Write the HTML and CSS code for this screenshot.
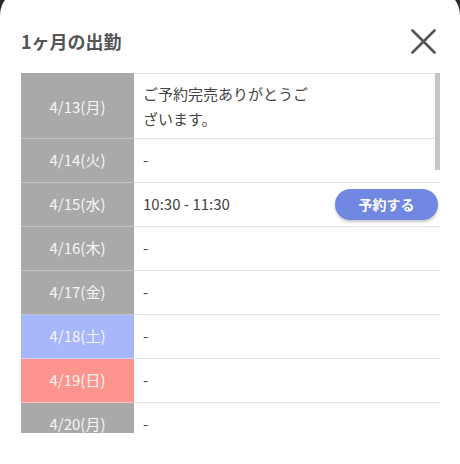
FILE: index.html
```html
<!DOCTYPE html>
<html lang="ja">
<head>
<meta charset="utf-8">
<title>1ヶ月の出勤</title>
<link rel="stylesheet" href="styles.css">
</head>
<body>
<div class="modal">
  <div class="header">
    <h1 class="title">1ヶ月の出勤</h1>
    <button class="close" aria-label="閉じる">
      <svg width="25" height="25" viewBox="0 0 25 25"><path d="M1.5 1.5 L23.5 23.5 M23.5 1.5 L1.5 23.5" stroke="#555" stroke-width="2.6" stroke-linecap="round" fill="none"/></svg>
    </button>
  </div>
  <div class="scroll-wrap">
    <div class="scroll">
      <table class="schedule">
        <colgroup><col class="c-date"><col><col class="c-btn"></colgroup>
        <tbody>
          <tr class="first"><td class="date">4/13(月)</td><td class="info">ご予約完売ありがとうございます。</td><td class="act"></td></tr>
          <tr><td class="date">4/14(火)</td><td class="info">-</td><td class="act"></td></tr>
          <tr><td class="date">4/15(水)</td><td class="info">10:30 - 11:30</td><td class="act"><span class="reserve">予約する</span></td></tr>
          <tr><td class="date">4/16(木)</td><td class="info">-</td><td class="act"></td></tr>
          <tr><td class="date">4/17(金)</td><td class="info">-</td><td class="act"></td></tr>
          <tr><td class="date sat">4/18(土)</td><td class="info">-</td><td class="act"></td></tr>
          <tr><td class="date sun">4/19(日)</td><td class="info">-</td><td class="act"></td></tr>
          <tr><td class="date">4/20(月)</td><td class="info">-</td><td class="act"></td></tr>
          <tr><td class="date">4/21(火)</td><td class="info">-</td><td class="act"></td></tr>
          <tr><td class="date">4/22(水)</td><td class="info">-</td><td class="act"></td></tr>
          <tr><td class="date">4/23(木)</td><td class="info">-</td><td class="act"></td></tr>
          <tr><td class="date">4/24(金)</td><td class="info">-</td><td class="act"></td></tr>
          <tr><td class="date sat">4/25(土)</td><td class="info">-</td><td class="act"></td></tr>
          <tr><td class="date sun">4/26(日)</td><td class="info">-</td><td class="act"></td></tr>
          <tr><td class="date">4/27(月)</td><td class="info">-</td><td class="act"></td></tr>
          <tr><td class="date">4/28(火)</td><td class="info">-</td><td class="act"></td></tr>
          <tr><td class="date">4/29(水)</td><td class="info">-</td><td class="act"></td></tr>
          <tr><td class="date">4/30(木)</td><td class="info">-</td><td class="act"></td></tr>
          <tr><td class="date">5/1(金)</td><td class="info">-</td><td class="act"></td></tr>
          <tr><td class="date sat">5/2(土)</td><td class="info">-</td><td class="act"></td></tr>
          <tr><td class="date sun">5/3(日)</td><td class="info">-</td><td class="act"></td></tr>
          <tr><td class="date">5/4(月)</td><td class="info">-</td><td class="act"></td></tr>
          <tr><td class="date">5/5(火)</td><td class="info">-</td><td class="act"></td></tr>
          <tr><td class="date">5/6(水)</td><td class="info">-</td><td class="act"></td></tr>
          <tr><td class="date">5/7(木)</td><td class="info">-</td><td class="act"></td></tr>
          <tr><td class="date">5/8(金)</td><td class="info">-</td><td class="act"></td></tr>
          <tr><td class="date sat">5/9(土)</td><td class="info">-</td><td class="act"></td></tr>
          <tr><td class="date sun">5/10(日)</td><td class="info">-</td><td class="act"></td></tr>
          <tr><td class="date">5/11(月)</td><td class="info">-</td><td class="act"></td></tr>
          <tr><td class="date">5/12(火)</td><td class="info">-</td><td class="act"></td></tr>
        </tbody>
      </table>
    </div>
    <div class="thumb"></div>
  </div>
</div>
</body>
</html>
```

FILE: styles.css
```css
html, body {
  margin: 0;
  padding: 0;
  height: 100%;
  overflow: hidden;
}
body {
  background: #2a2a2a;
  font-family: "Noto Sans CJK JP", "Noto Sans", sans-serif;
  color: #444;
}
.modal {
  margin-top: -10px;
  background: #fff;
  border-radius: 25px 25px 0 0;
  padding: 39px 20px 0 21px;
  height: 520px;
  box-sizing: border-box;
}
.header {
  display: flex;
  justify-content: space-between;
  align-items: center;
  height: 24px;
  margin-bottom: 20px;
}
.title {
  margin: 0;
  font-size: 18px;
  font-weight: bold;
  color: #555;
  line-height: 24px;
}
.close {
  border: 0;
  background: none;
  padding: 0;
  margin: 0 4px 0 0;
  width: 25px;
  height: 25px;
  display: flex;
}
.scroll-wrap {
  position: relative;
  height: 360px;
}
.scroll {
  height: 100%;
  overflow-y: auto;
  scrollbar-width: none;
}
.scroll::-webkit-scrollbar {
  display: none;
}
.thumb {
  position: absolute;
  top: 0;
  right: 0;
  width: 5px;
  height: 97px;
  background: #c6c6c6;
}
.schedule {
  width: 100%;
  border-collapse: separate;
  border-spacing: 0;
  table-layout: fixed;
  font-size: 15px;
}
.c-date { width: 113px; }
.c-btn { width: 110px; }
.schedule td {
  padding: 10px 9px 11px;
  line-height: 22px;
  border-bottom: 1px solid #e3e3e3;
  vertical-align: middle;
}
.schedule tr.first td {
  border-top: 1px solid #e3e3e3;
  padding-top: 7px;
  padding-bottom: 7px;
  line-height: 25px;
}
.schedule td.date {
  background: #a9a9a9;
  color: #f6f6f6;
  text-align: center;
  border-bottom-color: #c3c3c3;
  padding-left: 0;
  padding-right: 0;
}
.schedule tr.first td.date {
  border-top-color: #a9a9a9;
}
.schedule td.date.sat {
  background: #a7b7fb;
  border-bottom-color: #c9d2fb;
}
.schedule td.date.sun {
  background: #fd948d;
  border-bottom-color: #f9c2bd;
}
.schedule td.info {
  color: #444;
  padding-right: 10px;
}
.schedule td.act {
  padding: 0 2px 0 0;
  text-align: right;
}
.reserve {
  display: inline-block;
  width: 103px;
  height: 31px;
  line-height: 31px;
  border-radius: 16px;
  background: #7088e2;
  color: #fff;
  font-weight: bold;
  font-size: 14px;
  text-align: center;
  box-shadow: 0 2px 3px rgba(0, 0, 0, 0.22);
  vertical-align: middle;
}
```
